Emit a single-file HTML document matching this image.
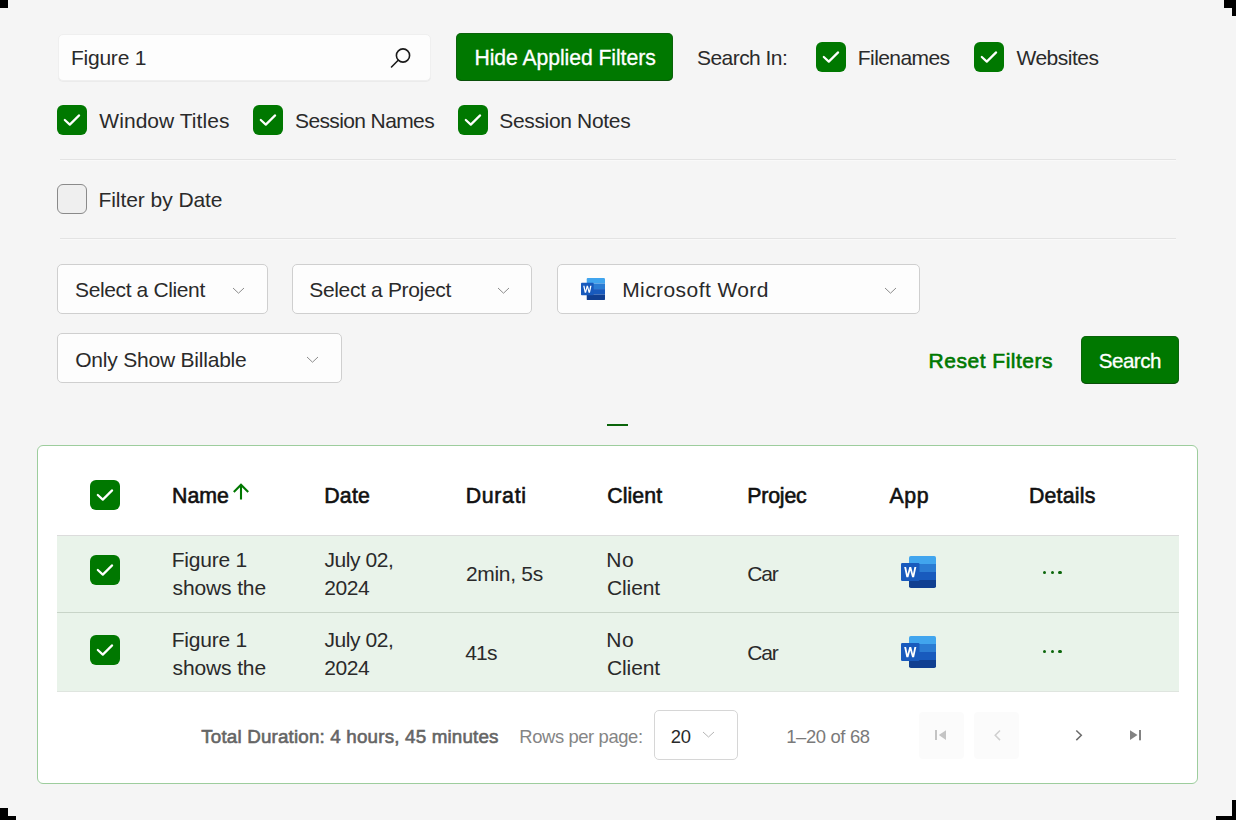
<!DOCTYPE html><html><head><meta charset="utf-8"><style>
html,body{margin:0;padding:0;}
body{width:1236px;height:820px;position:relative;overflow:hidden;background:#f5f5f5;font-family:"Liberation Sans",sans-serif;}
.t{position:absolute;white-space:nowrap;}
.abs{position:absolute;}
.box{position:absolute;box-sizing:border-box;}
.cb{position:absolute;width:30px;height:30px;border-radius:6px;background:#007800;}
.cb svg{position:absolute;left:0;top:0;}
.corner{position:absolute;background:#000;}
</style></head><body>

<div class="box" style="left:58px;top:34.3px;width:372.5px;height:46.5px;background:#fdfdfd;border:1px solid #efefef;border-radius:5px;box-shadow:0 1px 0 #ebebeb"></div>
<svg class="abs" style="left:386px;top:44.5px" width="28" height="28" viewBox="0 0 28 28"><circle cx="17" cy="10.5" r="6.6" fill="none" stroke="#1a1a1a" stroke-width="1.6"/><path d="M12.2 15.3 L5.5 22" stroke="#1a1a1a" stroke-width="1.6" stroke-linecap="round"/></svg>
<div class="box" style="left:456px;top:33px;width:217px;height:48px;background:#007800;border-radius:5px;box-shadow:inset 0 0 0 1px rgba(30,60,30,0.35), inset 0 -1px 0 rgba(0,0,0,0.25)"></div>
<div class="cb" style="left:816px;top:42px"><svg width="30" height="30" viewBox="0 0 30 30"><path d="M7.8 15 L12.8 19.6 L22.1 10.4" fill="none" stroke="#fff" stroke-width="2.2" stroke-linecap="round" stroke-linejoin="round"/></svg></div>
<div class="cb" style="left:974px;top:42px"><svg width="30" height="30" viewBox="0 0 30 30"><path d="M7.8 15 L12.8 19.6 L22.1 10.4" fill="none" stroke="#fff" stroke-width="2.2" stroke-linecap="round" stroke-linejoin="round"/></svg></div>
<div class="cb" style="left:57px;top:105px"><svg width="30" height="30" viewBox="0 0 30 30"><path d="M7.8 15 L12.8 19.6 L22.1 10.4" fill="none" stroke="#fff" stroke-width="2.2" stroke-linecap="round" stroke-linejoin="round"/></svg></div>
<div class="cb" style="left:253px;top:105px"><svg width="30" height="30" viewBox="0 0 30 30"><path d="M7.8 15 L12.8 19.6 L22.1 10.4" fill="none" stroke="#fff" stroke-width="2.2" stroke-linecap="round" stroke-linejoin="round"/></svg></div>
<div class="cb" style="left:458px;top:105px"><svg width="30" height="30" viewBox="0 0 30 30"><path d="M7.8 15 L12.8 19.6 L22.1 10.4" fill="none" stroke="#fff" stroke-width="2.2" stroke-linecap="round" stroke-linejoin="round"/></svg></div>
<div class="box" style="left:60px;top:158.7px;width:1116px;height:1px;background:#e3e3e3"></div><div class="box" style="left:60px;top:159.7px;width:1116px;height:1px;background:#f9f9f9"></div>
<div class="box" style="left:60px;top:238px;width:1116px;height:1px;background:#e3e3e3"></div><div class="box" style="left:60px;top:239px;width:1116px;height:1px;background:#f9f9f9"></div>
<div class="box" style="left:57px;top:184px;width:30px;height:29.5px;border:1.4px solid #8a8a8a;border-radius:6px;background:#efefef"></div>
<div class="box" style="left:57.3px;top:263.9px;width:210.7px;height:50.60000000000002px;background:#fdfdfd;border:1.3px solid #cfcfcf;border-radius:5px"></div>
<div class="box" style="left:292.3px;top:263.9px;width:240.2px;height:50.60000000000002px;background:#fdfdfd;border:1.3px solid #cfcfcf;border-radius:5px"></div>
<div class="box" style="left:557.3px;top:263.9px;width:362.70000000000005px;height:50.60000000000002px;background:#fdfdfd;border:1.3px solid #cfcfcf;border-radius:5px"></div>
<div class="box" style="left:57.3px;top:332.9px;width:285.2px;height:50.60000000000002px;background:#fdfdfd;border:1.3px solid #cfcfcf;border-radius:5px"></div>
<svg class="abs" style="left:230.7px;top:285.7px" width="15" height="9.2"><path d="M2 2 L7.5 7.2 L13 2" fill="none" stroke="#8c8c8c" stroke-width="1.0"/></svg>
<svg class="abs" style="left:495.7px;top:285.7px" width="15" height="9.2"><path d="M2 2 L7.5 7.2 L13 2" fill="none" stroke="#8c8c8c" stroke-width="1.0"/></svg>
<svg class="abs" style="left:883.2px;top:285.7px" width="15" height="9.2"><path d="M2 2 L7.5 7.2 L13 2" fill="none" stroke="#8c8c8c" stroke-width="1.0"/></svg>
<svg class="abs" style="left:305.2px;top:354.7px" width="15" height="9.2"><path d="M2 2 L7.5 7.2 L13 2" fill="none" stroke="#8c8c8c" stroke-width="1.0"/></svg>
<svg class="abs" style="left:581px;top:278.3px" width="24" height="22.2" viewBox="0 0 35 32" preserveAspectRatio="none"><clipPath id="dc1"><rect x="8" y="0" width="27" height="32" rx="1.8"/></clipPath><g clip-path="url(#dc1)"><rect x="8" y="0" width="27" height="8" fill="#41a5ee"/><rect x="8" y="8" width="27" height="8" fill="#2b7cd3"/><rect x="8" y="16" width="27" height="8" fill="#185abd"/><rect x="8" y="24" width="27" height="8" fill="#103f91"/></g><rect x="0" y="7" width="18.5" height="18" rx="1.2" fill="#185abd"/><path d="M3.2 11 L5.4 21.2 H7.4 L9.25 14.6 L11.1 21.2 H13.1 L15.3 11 H13.4 L12 18 L10.2 11 H8.3 L6.5 18 L5.1 11z" fill="#fff"/></svg>
<div class="box" style="left:1081px;top:336px;width:98px;height:47.5px;background:#007800;border-radius:5px;box-shadow:inset 0 0 0 1px rgba(30,60,30,0.35), inset 0 -1px 0 rgba(0,0,0,0.25)"></div>
<div class="box" style="left:606.5px;top:424.4px;width:21.5px;height:2px;background:#0a640a"></div>
<div class="box" style="left:37px;top:445.3px;width:1161.3px;height:338.7px;background:#ffffff;border:1.7px solid #9dcd9d;border-radius:6px"></div>
<div class="cb" style="left:90px;top:480px"><svg width="30" height="30" viewBox="0 0 30 30"><path d="M7.8 15 L12.8 19.6 L22.1 10.4" fill="none" stroke="#fff" stroke-width="2.2" stroke-linecap="round" stroke-linejoin="round"/></svg></div>
<div class="box" style="left:57px;top:535px;width:1121.5px;height:1px;background:#dcdcdc"></div>
<div class="box" style="left:57px;top:536px;width:1121.5px;height:76.4px;background:#e9f3ea"></div>
<div class="box" style="left:57px;top:612px;width:1121.5px;height:1px;background:#c8d4c8"></div>
<div class="box" style="left:57px;top:613px;width:1121.5px;height:78.5px;background:#e9f3ea"></div>
<div class="box" style="left:57px;top:691.3px;width:1121.5px;height:1px;background:#dfe5df"></div>
<div class="cb" style="left:90px;top:555px"><svg width="30" height="30" viewBox="0 0 30 30"><path d="M7.8 15 L12.8 19.6 L22.1 10.4" fill="none" stroke="#fff" stroke-width="2.2" stroke-linecap="round" stroke-linejoin="round"/></svg></div>
<div class="cb" style="left:90px;top:634.5px"><svg width="30" height="30" viewBox="0 0 30 30"><path d="M7.8 15 L12.8 19.6 L22.1 10.4" fill="none" stroke="#fff" stroke-width="2.2" stroke-linecap="round" stroke-linejoin="round"/></svg></div>
<svg class="abs" style="left:901px;top:556px" width="35" height="32" viewBox="0 0 35 32" preserveAspectRatio="none"><clipPath id="dc2"><rect x="8" y="0" width="27" height="32" rx="1.8"/></clipPath><g clip-path="url(#dc2)"><rect x="8" y="0" width="27" height="8" fill="#41a5ee"/><rect x="8" y="8" width="27" height="8" fill="#2b7cd3"/><rect x="8" y="16" width="27" height="8" fill="#185abd"/><rect x="8" y="24" width="27" height="8" fill="#103f91"/></g><rect x="0" y="7" width="18.5" height="18" rx="1.2" fill="#185abd"/><path d="M3.2 11 L5.4 21.2 H7.4 L9.25 14.6 L11.1 21.2 H13.1 L15.3 11 H13.4 L12 18 L10.2 11 H8.3 L6.5 18 L5.1 11z" fill="#fff"/></svg>
<svg class="abs" style="left:901px;top:635.5px" width="35" height="32" viewBox="0 0 35 32" preserveAspectRatio="none"><clipPath id="dc3"><rect x="8" y="0" width="27" height="32" rx="1.8"/></clipPath><g clip-path="url(#dc3)"><rect x="8" y="0" width="27" height="8" fill="#41a5ee"/><rect x="8" y="8" width="27" height="8" fill="#2b7cd3"/><rect x="8" y="16" width="27" height="8" fill="#185abd"/><rect x="8" y="24" width="27" height="8" fill="#103f91"/></g><rect x="0" y="7" width="18.5" height="18" rx="1.2" fill="#185abd"/><path d="M3.2 11 L5.4 21.2 H7.4 L9.25 14.6 L11.1 21.2 H13.1 L15.3 11 H13.4 L12 18 L10.2 11 H8.3 L6.5 18 L5.1 11z" fill="#fff"/></svg>
<div class="box" style="left:1042.7px;top:570.9px;width:3.2px;height:3.2px;border-radius:50%;background:#0b660b"></div>
<div class="box" style="left:1050.5px;top:570.9px;width:3.2px;height:3.2px;border-radius:50%;background:#0b660b"></div>
<div class="box" style="left:1058.4px;top:570.9px;width:3.2px;height:3.2px;border-radius:50%;background:#0b660b"></div>
<div class="box" style="left:1042.7px;top:649.9px;width:3.2px;height:3.2px;border-radius:50%;background:#0b660b"></div>
<div class="box" style="left:1050.5px;top:649.9px;width:3.2px;height:3.2px;border-radius:50%;background:#0b660b"></div>
<div class="box" style="left:1058.4px;top:649.9px;width:3.2px;height:3.2px;border-radius:50%;background:#0b660b"></div>
<svg class="abs" style="left:228px;top:480px" width="26" height="24"><path d="M13 4.5 V19.5 M5.8 12 L13 4.8 L20.2 12" fill="none" stroke="#007800" stroke-width="2.1"/></svg>
<div class="box" style="left:653.5px;top:709.5px;width:84.5px;height:50.5px;background:#fff;border:1.3px solid #d6d6d6;border-radius:5px"></div>
<svg class="abs" style="left:701.0px;top:730.0px" width="15" height="9"><path d="M2 2 L7.5 7 L13 2" fill="none" stroke="#b5b5b5" stroke-width="1.0"/></svg>
<div class="box" style="left:919px;top:712px;width:44.5px;height:46.5px;background:#fbfbfb;border-radius:4px"></div>
<div class="box" style="left:974px;top:712px;width:45px;height:46.5px;background:#fbfbfb;border-radius:4px"></div>
<svg class="abs" style="left:930px;top:725px" width="22" height="20"><rect x="5" y="5" width="2" height="10" fill="#c4c4c4"/><path d="M16 5.3 V15 L8.8 10.1z" fill="#c4c4c4"/></svg>
<svg class="abs" style="left:990px;top:725px" width="16" height="20"><path d="M10 5.5 L5.2 10.3 L10 15.1" fill="none" stroke="#cfcfcf" stroke-width="1.5"/></svg>
<svg class="abs" style="left:1071px;top:725px" width="16" height="20"><path d="M5.3 5.5 L10.3 10.3 L5.3 15.1" fill="none" stroke="#6a6a6a" stroke-width="1.5"/></svg>
<svg class="abs" style="left:1125px;top:725px" width="22" height="20"><path d="M5 5.3 V15 L12.5 10.1z" fill="#828282"/><rect x="14" y="5" width="2" height="10.3" fill="#828282"/></svg>
<div class="t" id="a1" style="left:70.89px;top:46.00px;font-size:21.0px;line-height:normal;font-weight:400;color:#2a2a2a;letter-spacing:-0.213px">Figure 1</div>
<div class="t" id="a2" style="left:474.48px;top:46.00px;font-size:21.2px;line-height:normal;font-weight:400;color:#ffffff;letter-spacing:-0.067px;-webkit-text-stroke:0.3px #ffffff">Hide Applied Filters</div>
<div class="t" id="a3" style="left:697.01px;top:46.00px;font-size:21.0px;line-height:normal;font-weight:400;color:#2a2a2a;letter-spacing:-0.548px">Search In:</div>
<div class="t" id="a4" style="left:857.79px;top:46.00px;font-size:21.0px;line-height:normal;font-weight:400;color:#2a2a2a;letter-spacing:-0.571px">Filenames</div>
<div class="t" id="a5" style="left:1016.47px;top:46.00px;font-size:21.0px;line-height:normal;font-weight:400;color:#2a2a2a;letter-spacing:-0.509px">Websites</div>
<div class="t" id="b1" style="left:99.33px;top:109.00px;font-size:21.0px;line-height:normal;font-weight:400;color:#2a2a2a;letter-spacing:0.044px">Window Titles</div>
<div class="t" id="b2" style="left:295.01px;top:109.00px;font-size:21.0px;line-height:normal;font-weight:400;color:#2a2a2a;letter-spacing:-0.617px">Session Names</div>
<div class="t" id="b3" style="left:499.22px;top:109.00px;font-size:21.0px;line-height:normal;font-weight:400;color:#2a2a2a;letter-spacing:-0.331px">Session Notes</div>
<div class="t" id="c1" style="left:98.49px;top:188.00px;font-size:21.0px;line-height:normal;font-weight:400;color:#2a2a2a;letter-spacing:-0.062px">Filter by Date</div>
<div class="t" id="d1" style="left:75.01px;top:278.00px;font-size:21.0px;line-height:normal;font-weight:400;color:#2a2a2a;letter-spacing:-0.369px">Select a Client</div>
<div class="t" id="d2" style="left:309.22px;top:278.00px;font-size:21.0px;line-height:normal;font-weight:400;color:#2a2a2a;letter-spacing:-0.334px">Select a Project</div>
<div class="t" id="d3" style="left:622.16px;top:278.00px;font-size:21.0px;line-height:normal;font-weight:400;color:#2a2a2a;letter-spacing:0.423px">Microsoft Word</div>
<div class="t" id="e1" style="left:75.19px;top:348.00px;font-size:21.0px;line-height:normal;font-weight:400;color:#2a2a2a;letter-spacing:-0.207px">Only Show Billable</div>
<div class="t" id="e2" style="left:928.60px;top:349.00px;font-size:21.0px;line-height:normal;font-weight:400;color:#007800;letter-spacing:0.509px;-webkit-text-stroke:0.6px #007800">Reset Filters</div>
<div class="t" id="e3" style="left:1098.80px;top:349.00px;font-size:20.6px;line-height:normal;font-weight:400;color:#ffffff;letter-spacing:-0.537px;-webkit-text-stroke:0.3px #ffffff">Search</div>
<div class="t" id="h1" style="left:172.10px;top:484.00px;font-size:21.3px;line-height:normal;font-weight:400;color:#111111;letter-spacing:0.000px;-webkit-text-stroke:0.6px #111111">Name</div>
<div class="t" id="h2" style="left:324.17px;top:484.00px;font-size:21.3px;line-height:normal;font-weight:400;color:#111111;letter-spacing:0.267px;-webkit-text-stroke:0.6px #111111">Date</div>
<div class="t" id="h3" style="left:465.65px;top:484.00px;font-size:21.3px;line-height:normal;font-weight:400;color:#111111;letter-spacing:0.710px;-webkit-text-stroke:0.6px #111111">Durati</div>
<div class="t" id="h4" style="left:607.22px;top:484.00px;font-size:21.3px;line-height:normal;font-weight:400;color:#111111;letter-spacing:0.076px;-webkit-text-stroke:0.6px #111111">Client</div>
<div class="t" id="h5" style="left:747.17px;top:484.00px;font-size:21.3px;line-height:normal;font-weight:400;color:#111111;letter-spacing:-0.151px;-webkit-text-stroke:0.6px #111111">Projec</div>
<div class="t" id="h6" style="left:889.60px;top:484.00px;font-size:21.3px;line-height:normal;font-weight:400;color:#111111;letter-spacing:0.535px;-webkit-text-stroke:0.6px #111111">App</div>
<div class="t" id="h7" style="left:1028.95px;top:484.00px;font-size:21.3px;line-height:normal;font-weight:400;color:#111111;letter-spacing:0.222px;-webkit-text-stroke:0.6px #111111">Details</div>
<div class="t" id="r0a" style="left:171.71px;top:548.00px;font-size:21.0px;line-height:normal;font-weight:400;color:#2a2a2a;letter-spacing:-0.214px">Figure 1</div>
<div class="t" id="r0b" style="left:172.53px;top:576.00px;font-size:21.0px;line-height:normal;font-weight:400;color:#2a2a2a;letter-spacing:-0.124px">shows the</div>
<div class="t" id="r0c" style="left:324.49px;top:548.00px;font-size:21.0px;line-height:normal;font-weight:400;color:#2a2a2a;letter-spacing:-0.421px">July 02,</div>
<div class="t" id="r0d" style="left:324.16px;top:576.00px;font-size:21.0px;line-height:normal;font-weight:400;color:#2a2a2a;letter-spacing:-0.417px">2024</div>
<div class="t" id="r0e" style="left:465.91px;top:562.00px;font-size:21.0px;line-height:normal;font-weight:400;color:#2a2a2a;letter-spacing:-0.301px">2min, 5s</div>
<div class="t" id="r0f" style="left:606.20px;top:548.00px;font-size:21.0px;line-height:normal;font-weight:400;color:#2a2a2a;letter-spacing:0.600px">No</div>
<div class="t" id="r0g" style="left:606.88px;top:576.00px;font-size:21.0px;line-height:normal;font-weight:400;color:#2a2a2a;letter-spacing:-0.081px">Client</div>
<div class="t" id="r0h" style="left:747.28px;top:562.00px;font-size:21.0px;line-height:normal;font-weight:400;color:#2a2a2a;letter-spacing:-1.142px">Car</div>
<div class="t" id="r1a" style="left:171.71px;top:628.00px;font-size:21.0px;line-height:normal;font-weight:400;color:#2a2a2a;letter-spacing:-0.214px">Figure 1</div>
<div class="t" id="r1b" style="left:172.53px;top:656.00px;font-size:21.0px;line-height:normal;font-weight:400;color:#2a2a2a;letter-spacing:-0.124px">shows the</div>
<div class="t" id="r1c" style="left:324.49px;top:628.00px;font-size:21.0px;line-height:normal;font-weight:400;color:#2a2a2a;letter-spacing:-0.421px">July 02,</div>
<div class="t" id="r1d" style="left:324.16px;top:656.00px;font-size:21.0px;line-height:normal;font-weight:400;color:#2a2a2a;letter-spacing:-0.417px">2024</div>
<div class="t" id="r1e" style="left:465.35px;top:641.00px;font-size:21.0px;line-height:normal;font-weight:400;color:#2a2a2a;letter-spacing:-0.905px">41s</div>
<div class="t" id="r1f" style="left:606.20px;top:628.00px;font-size:21.0px;line-height:normal;font-weight:400;color:#2a2a2a;letter-spacing:0.600px">No</div>
<div class="t" id="r1g" style="left:606.88px;top:656.00px;font-size:21.0px;line-height:normal;font-weight:400;color:#2a2a2a;letter-spacing:-0.081px">Client</div>
<div class="t" id="r1h" style="left:747.28px;top:641.00px;font-size:21.0px;line-height:normal;font-weight:400;color:#2a2a2a;letter-spacing:-1.142px">Car</div>
<div class="t" id="f1" style="left:201.21px;top:726.00px;font-size:18.8px;line-height:normal;font-weight:400;color:#656565;letter-spacing:0.177px;-webkit-text-stroke:0.6px #656565">Total Duration: 4 hours, 45 minutes</div>
<div class="t" id="f2" style="left:519.28px;top:726.00px;font-size:18.4px;line-height:normal;font-weight:400;color:#858585;letter-spacing:-0.390px">Rows per page:</div>
<div class="t" id="f3" style="left:670.69px;top:726.00px;font-size:18.4px;line-height:normal;font-weight:400;color:#2a2a2a;letter-spacing:-0.210px">20</div>
<div class="t" id="f4" style="left:786.15px;top:726.00px;font-size:18.4px;line-height:normal;font-weight:400;color:#7a7a7a;letter-spacing:-0.341px">1–20 of 68</div>
<div class="corner" style="left:0px;top:0px;width:8px;height:8px"></div>
<div class="corner" style="left:1224px;top:0px;width:12px;height:8px"></div>
<div class="corner" style="left:1232px;top:8px;width:4px;height:8px"></div>
<div class="corner" style="left:1232px;top:800px;width:4px;height:20px"></div>
<div class="corner" style="left:1216px;top:816px;width:16px;height:4px"></div>
<div class="corner" style="left:0px;top:808px;width:8px;height:12px"></div>
<div class="corner" style="left:8px;top:816px;width:8px;height:4px"></div>
</body></html>
